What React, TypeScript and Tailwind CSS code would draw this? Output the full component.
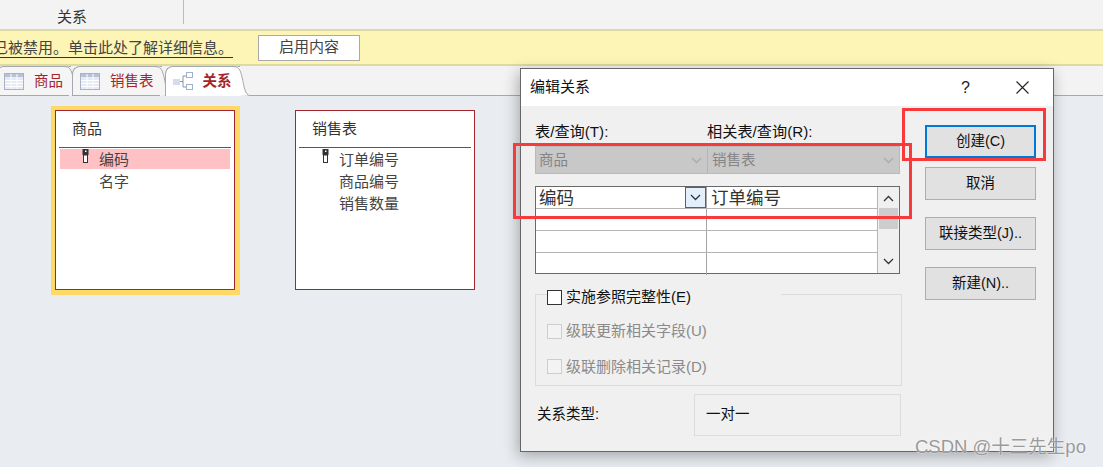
import type { ReactNode } from 'react';

const TableIcon = () => (
  <svg width="20" height="17" viewBox="0 0 20 17">
    <rect x="0.5" y="0.5" width="19" height="16" fill="#e6eaf4" stroke="#a9b3c6" />
    <rect x="1" y="1" width="18" height="3" fill="#b7c1d8" />
    <path d="M7 1v15M13 1v15M1 7.5h18M1 10.5h18M1 13.5h18" stroke="#fff" />
  </svg>
);

const RelationIcon = () => (
  <svg width="20" height="18" viewBox="0 0 20 18">
    <rect x="0" y="7" width="7" height="6" fill="#d5dcec" />
    <rect x="13.5" y="0.5" width="6" height="5" fill="#fff" stroke="#9fb2d0" />
    <rect x="13.5" y="12.5" width="6" height="5" fill="#fff" stroke="#9fb2d0" />
    <path d="M7 9.5h3M10 4v11M10 4h3M10 15h3" stroke="#8b94a6" fill="none" />
  </svg>
);

const KeyIcon = () => (
  <svg width="7" height="14" viewBox="0 0 7 14">
    <rect x="0.5" y="0" width="6" height="6" fill="#333" />
    <rect x="3" y="1.5" width="1.5" height="1.5" fill="#fff" />
    <rect x="1.5" y="6" width="4" height="7.500" fill="#fff" stroke="#333" />
  </svg>
);

const Chevron = ({ up, color = '#333' }: { up?: boolean; color?: string }) => (
  <svg width="11" height="7" viewBox="0 0 11 7" fill="none" stroke={color} strokeWidth="1.3">
    <path d={up ? 'M1 6l4.5-4.5L10 6' : 'M1 1l4.5 4.5L10 1'} />
  </svg>
);

const Tab = ({ label, icon, active }: { label: string; icon: ReactNode; active?: boolean }) => (
  <div
    className={`relative flex h-[30px] items-center gap-[10px] rounded-tl-[8px] border-t border-l border-[#a5a8ae] pr-[8px] pl-[7px] ${
      active ? 'z-10 bg-[#ffffff] pb-[1px]' : 'border-b bg-[#f5f5f5]'
    }`}
  >
    {icon}
    <span className={`pt-[1px] text-[14.5px] text-[#a4262c] ${active ? 'font-bold' : ''}`}>{label}</span>
    <svg className="absolute top-[-1px] left-full overflow-visible" width="10" height="30" viewBox="0 0 10 30" fill="none">
      <path d="M-8 .5C-1 .5 0 3 2 11c2 9 3 18.500 8 18.500L-2 30V.5z" fill={active ? '#fff' : '#f5f5f5'} />
      <path d="M-8 .5C-1 .5 0 3 2 11c2 9 3 18.500 8 18.500" stroke="#a5a8ae" />
    </svg>
  </div>
);

const TableBox = ({
  title,
  fields,
  selected,
  className,
}: {
  title: string;
  fields: string[];
  selected?: boolean;
  className: string;
}) => (
  <div className={`absolute border border-[#a4262c] bg-white ${className}`}>
    <div className="mx-[3px] flex h-[37px] items-center border-b border-[#9c3a3e] pl-[13px] text-[15px] text-[#333]">
      {title}
    </div>
    <div className="flex flex-col pt-[1px]">
      {fields.map((f, i) => (
        <div
          key={f}
          className={`relative mx-[4px] mb-[2px] flex h-[20px] items-center pl-[39px] text-[15px] leading-none text-[#444] ${
            selected && i === 0 ? 'bg-[#ffc1c4]' : ''
          }`}
        >
          {i === 0 && (
            <span className="absolute top-0 left-[22px]">
              <KeyIcon />
            </span>
          )}
          {f}
        </div>
      ))}
    </div>
  </div>
);

const DialogButton = ({ label, focused }: { label: string; focused?: boolean }) => (
  <button
    className={`flex h-[33px] w-[111px] items-center justify-center bg-[#e1e1e1] pt-[1px] text-[14.500px] text-[#111] ${
      focused ? 'border-2 border-[#0078d7]' : 'border border-[#adadad]'
    }`}
  >
    {label}
  </button>
);

const GridRow = ({ left, right, last }: { left?: ReactNode; right?: ReactNode; last?: boolean }) => (
  <div className={`flex h-[22px] ${last ? '' : 'border-b border-[#b5b5b5]'}`}>
    <div className="relative flex w-[171px] items-center border-r border-[#a5a5a5] pl-[3px]">{left}</div>
    <div className="flex flex-1 items-center pl-[4px]">{right}</div>
  </div>
);

const CheckRow = ({ label, disabled }: { label: string; disabled?: boolean }) => (
  <div className="flex items-center gap-[4px]">
    <span className={`h-[15px] w-[15px] ${disabled ? 'border border-[#cdcdcd] bg-[#f3f3f3]' : 'border border-[#333] bg-white'}`} />
    <span className={`text-[15px] ${disabled ? 'text-[#8a8a8a]' : 'text-[#111]'}`}>{label}</span>
  </div>
);

export default function App() {
  return (
    <div className="relative h-[467px] w-[1103px] overflow-hidden bg-[#e9edf1] font-['Liberation_Sans','Noto_Sans_CJK_SC',sans-serif]">
      {/* ribbon */}
      <div className="flex h-[29px] bg-[#f3f3f3]">
        <div className="flex h-[24px] w-[184px] items-end justify-start border-r border-[#bdbdbd] pl-[57px]">
          <span className="text-[15px] leading-none text-[#333]">关系</span>
        </div>
      </div>

      {/* message bar */}
      <div className="flex h-[37px] items-center border-y-2 border-t-[#dcd9a9] border-b-[#dedb9e] bg-[#fcf5b5]">
        <div className="flex w-[233px] justify-end overflow-hidden">
          <span className="whitespace-nowrap border-b border-[#333] text-[15px] leading-[19px] text-[#444]">
            内容已被禁用。单击此处了解详细信息。
          </span>
        </div>
        <button className="ml-[25px] flex h-[26px] w-[102px] items-center justify-center border border-[#aaa] bg-white text-[15px] text-[#444]">
          启用内容
        </button>
      </div>

      {/* document tabs */}
      <div className="flex h-[30px] items-start gap-[3px] border-b border-[#a5a8ae] bg-[#f3f3f3]">
        <div className="-ml-[4px] mr-[-2px]">
          <Tab label="商品" icon={<TableIcon />} />
        </div>
        <Tab label="销售表" icon={<TableIcon />} />
        <Tab label="关系" icon={<RelationIcon />} active />
      </div>

      {/* relationship canvas */}
      <div className="absolute top-[106px] left-[51px] h-[189px] w-[189px] bg-[#ffd966]" />
      <TableBox className="top-[110px] left-[55px] h-[180px] w-[180px]" title="商品" fields={['编码', '名字']} selected />
      <TableBox className="top-[110px] left-[295px] h-[180px] w-[180px]" title="销售表" fields={['订单编号', '商品编号', '销售数量']} />

      {/* edit relationship dialog */}
      <div className="absolute top-[68px] left-[520px] flex h-[384px] w-[534px] flex-col border border-[#666] bg-[#f0f0f0] shadow-[-2px_4px_14px_rgba(0,0,0,0.3)]">
        <div className="flex h-[37px] shrink-0 items-center bg-white pr-[24px] pl-[9px]">
          <span className="text-[15px] text-[#111]">编辑关系</span>
          <span className="mr-[46px] ml-auto text-[16px] text-[#222]">?</span>
          <svg width="13" height="13" viewBox="0 0 13 13" stroke="#222" strokeWidth="1.100">
            <path d="M.5.5l12 12M12.500.5l-12 12" />
          </svg>
        </div>

        <div className="flex flex-1 pl-[14px]">
          <div className="flex w-[367px] flex-col">
            <div className="mt-[16px] flex h-[20px] items-center text-[15.200px] text-[#111]">
              <span className="w-[172px]">表/查询(T):</span>
              <span>相关表/查询(R):</span>
            </div>
            <div className="mt-[4px] flex h-[28px] w-[365px] border border-[#bababa] bg-[#c8c8c8] pt-[1px] text-[14.500px] text-[#858585]">
              <div className="flex w-[172px] items-center justify-between border-r border-[#b5b5b5] pr-[5px] pl-[3px]">
                商品
                <Chevron color="#aaa" />
              </div>
              <div className="flex flex-1 items-center justify-between pr-[5px] pl-[4px]">
                销售表
                <Chevron color="#aaa" />
              </div>
            </div>
            <div className="mt-[12px] flex h-[88px] w-[365px] border border-[#696969] bg-white">
              <div className="flex-1">
                <GridRow
                  left={
                    <>
                      <span className="pt-[1px] text-[17.500px] text-[#333]">编码</span>
                      <span className="absolute top-0 right-0 flex h-[21px] w-[21px] items-center justify-center border border-[#0078d7] bg-[#e3f0fb]">
                        <Chevron />
                      </span>
                    </>
                  }
                  right={<span className="pt-[1px] text-[17.500px] text-[#333]">订单编号</span>}
                />
                <GridRow />
                <GridRow />
                <GridRow last />
              </div>
              <div className="flex w-[22px] flex-col items-center justify-between border-l border-[#b5b5b5] bg-[#f0f0f0] py-[8px]">
                <Chevron up />
                <span className="absolute top-[139px] h-[21px] w-[19px] bg-[#cdcdcd]" />
                <Chevron />
              </div>
            </div>

            <div className="relative mt-[20px] flex h-[92px] w-[367px] flex-col border border-[#dcdcdc] pt-[25px] pl-[11px]">
              <div className="absolute -top-[9px] left-[11px] w-[234px] bg-[#f0f0f0]">
                <CheckRow label="实施参照完整性(E)" />
              </div>
              <CheckRow label="级联更新相关字段(U)" disabled />
              <div className="mt-[13px]">
                <CheckRow label="级联删除相关记录(D)" disabled />
              </div>
            </div>

            <div className="mt-[8px] flex items-center">
              <span className="w-[159px] pl-[2px] text-[14.500px] text-[#111]">关系类型:</span>
              <div className="flex h-[42px] w-[207px] items-center border border-[#dcdcdc] pl-[11px] text-[14.500px] text-[#111]">
                一对一
              </div>
            </div>
          </div>

          <div className="mt-[19px] ml-[23px] flex flex-col">
            <DialogButton label="创建(C)" focused />
            <div className="mt-[9px]">
              <DialogButton label="取消" />
            </div>
            <div className="mt-[17px]">
              <DialogButton label="联接类型(J).." />
            </div>
            <div className="mt-[17px]">
              <DialogButton label="新建(N).." />
            </div>
          </div>
        </div>
      </div>

      {/* annotations drawn over the screenshot */}
      <div className="absolute top-[143px] left-[513px] h-[76px] w-[399px] border-[3px] border-[#f83a3a]" />
      <div className="absolute top-[108px] left-[902px] h-[53px] w-[144px] border-[3px] border-[#f83a3a]" />

      <span className="absolute top-[435px] left-[915px] whitespace-nowrap text-[18.500px] leading-[24px] text-[#9a9a9a] [text-shadow:0_0_2px_#fff]">
        CSDN @十三先生po
      </span>
    </div>
  );
}
